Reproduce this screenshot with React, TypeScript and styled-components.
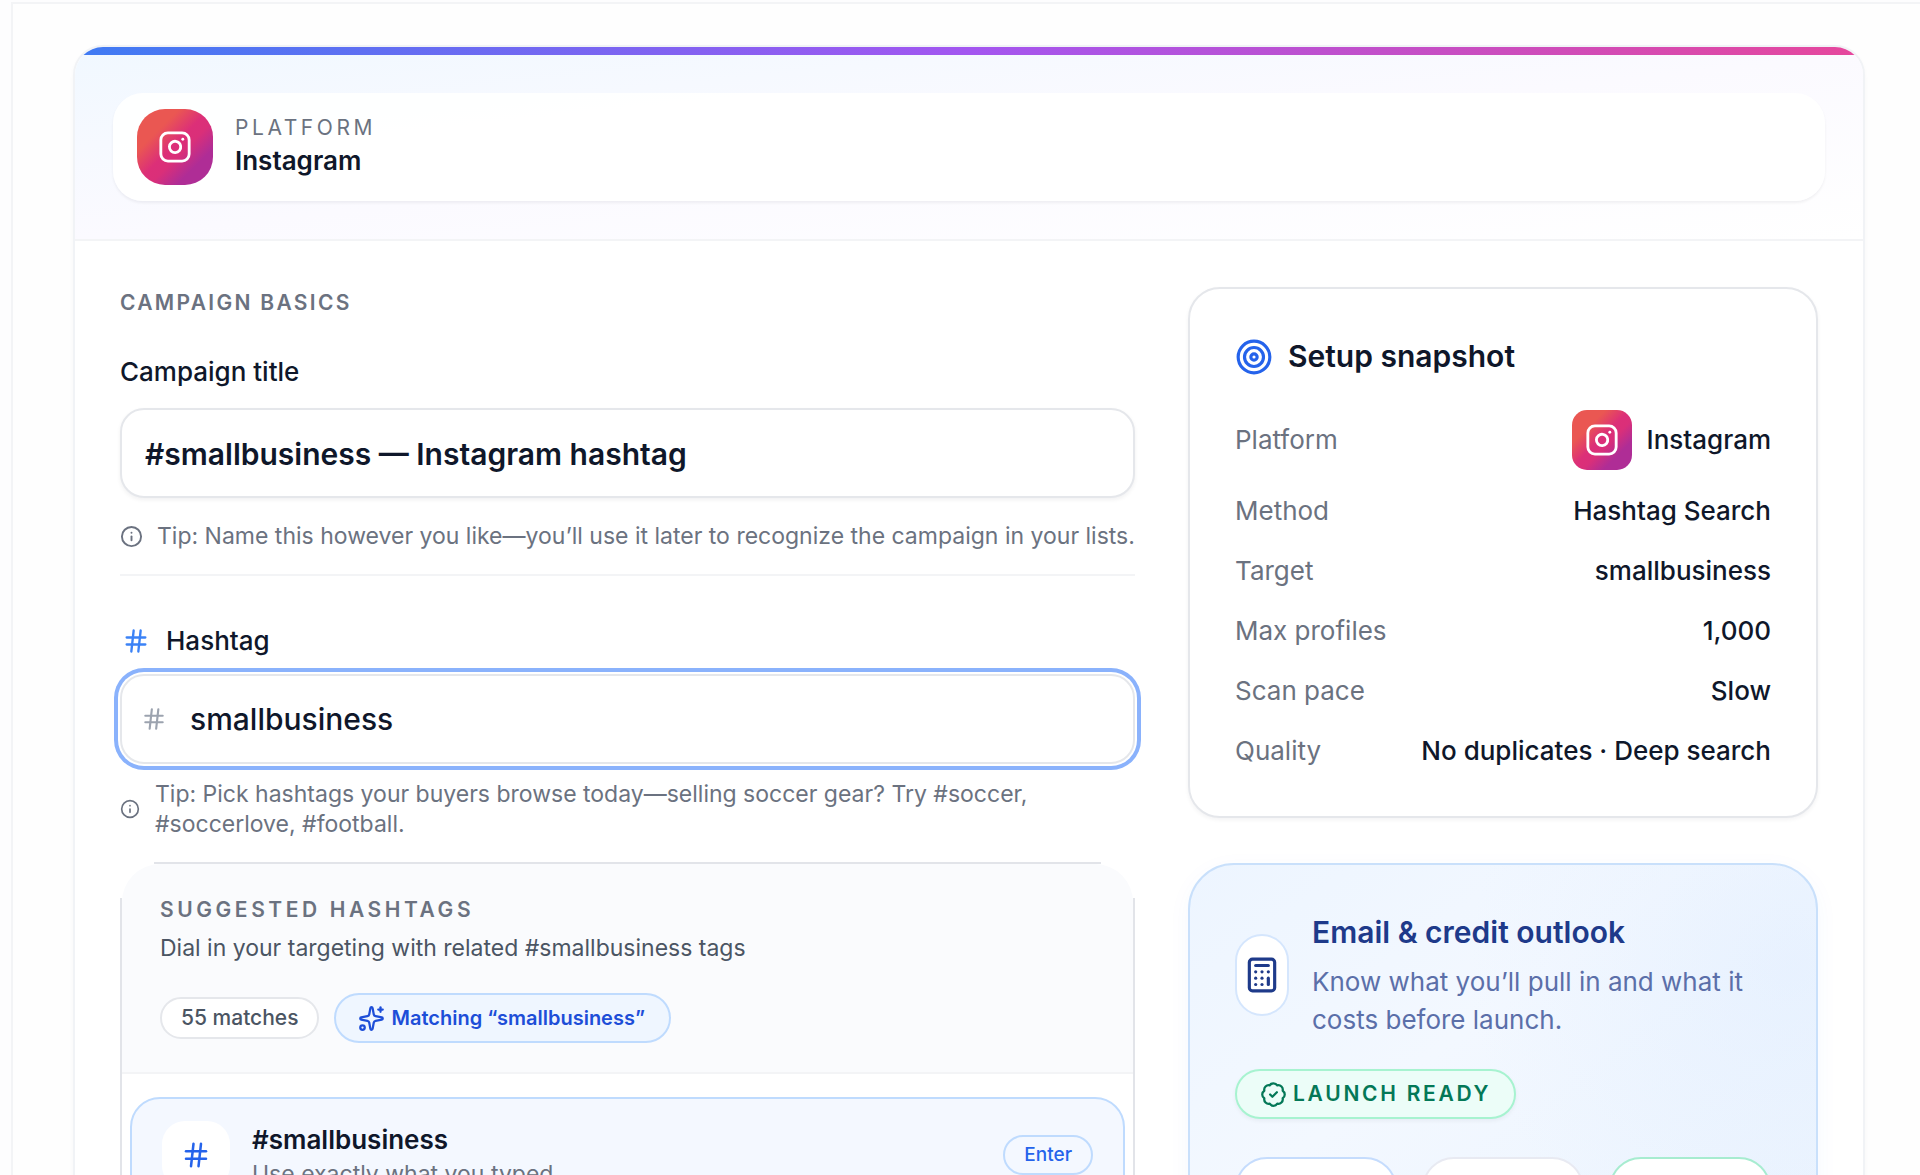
import React, { useState } from "react";
import styled, { createGlobalStyle, css } from "styled-components";
import { BadgeCheck, Calculator, Hash, Info, Instagram, Sparkles, Target } from "lucide-react";

const color = {
  ink: "#0f172a",
  body: "#4b5563",
  muted: "#6b7280",
  faint: "#9ca3af",
  line: "#e5e7eb",
  hairline: "#f3f4f6",
  blue: "#2563eb",
  blueLine: "#bfdbfe",
  blueWash: "#eff6ff",
  navy: "#1e3a8a",
};

const GlobalStyle = createGlobalStyle`
  *, *::before, *::after { box-sizing: border-box; }
  body {
    margin: 0;
    background: #fdfdfe;
    color: ${color.ink};
    font-family: Inter, "Liberation Sans", sans-serif;
    font-size: 26px;
    line-height: 38px;
    -webkit-font-smoothing: antialiased;
  }
  h1, h2, h3, p, dl, dd, ul { margin: 0; padding: 0; }
  input, button { font: inherit; color: inherit; }
`;

const Viewport = styled.div`
  height: 100vh;
  overflow: hidden;
  padding: 2px 0 0 11px;
`;

const Shell = styled.main`
  min-height: 100%;
  padding: 41px 55px 0 60px;
  border: 2px solid ${color.hairline};
  border-width: 2px 0 0 2px;
  background: #fefefe;
`;

const Card = styled.div`
  overflow: hidden;
  border: 2px solid #f1f3f6;
  border-radius: 30px;
  background: #fff;
  box-shadow: 0 2px 4px rgba(15, 23, 42, 0.03);
`;

const AccentBar = styled.div`
  height: 8px;
  background: linear-gradient(90deg, #3f7bf3, #a356f0, #e6479c);
`;

const CardHeader = styled.header`
  padding: 38px;
  border-bottom: 2px solid ${color.hairline};
  background: linear-gradient(to bottom right, #f1f8ff, #fbfaff 50%, #fff);
`;

const PlatformPanel = styled.div`
  display: flex;
  align-items: center;
  gap: 22px;
  padding: 16px 24px;
  border-radius: 30px;
  background: rgba(255, 255, 255, 0.9);
  box-shadow: 0 2px 3px rgba(15, 23, 42, 0.06);
`;

const PlatformTile = styled.span<{ $size: number; $radius: number }>`
  display: inline-flex;
  flex: none;
  align-items: center;
  justify-content: center;
  width: ${(p) => p.$size}px;
  height: ${(p) => p.$size}px;
  border-radius: ${(p) => p.$radius}px;
  background: linear-gradient(135deg, #ea5752 28%, #dc2f78 48%, #da2f79 58%, #af2d96 76%);
  color: #fff;
`;

const Overline = styled.h2<{ $weight?: number; $tracking: string; $line?: number }>`
  color: ${color.muted};
  font-size: 21px;
  font-weight: ${(p) => p.$weight ?? 600};
  line-height: ${(p) => p.$line ?? 30}px;
  letter-spacing: ${(p) => p.$tracking};
  text-transform: uppercase;
`;

const PlatformName = styled.p`
  font-weight: 600;
`;

const Columns = styled.div`
  display: grid;
  grid-template-columns: minmax(0, 1fr) 630px;
  align-items: start;
  gap: 53px;
  padding: 46px 45px;
`;

const MainColumn = styled.section`
  display: flex;
  flex-direction: column;
`;

const Aside = styled.aside`
  display: flex;
  flex-direction: column;
  gap: 45px;
`;

const Field = styled.div`
  display: flex;
  flex-direction: column;
`;

const TitleField = styled(Field)`
  padding: 34px 0 23px;
  border-bottom: 2px solid ${color.hairline};
`;

const HashtagField = styled(Field)`
  padding: 46px 0 23px;
`;

const FieldLabel = styled.label`
  display: flex;
  align-items: center;
  gap: 16px;
  margin-bottom: 17px;
  font-weight: 500;

  svg { color: #3b82f6; }
`;

const HashtagLabel = styled(FieldLabel)`
  margin-bottom: 14px;
  padding-left: 2px;
`;

const fieldBox = css`
  width: 100%;
  height: 90px;
  border: 2px solid ${color.line};
  border-radius: 24px;
  background: #fff;
  font-size: 30px;
`;

const TitleInput = styled.input`
  ${fieldBox}
  padding: 2px 23px 0;
  box-shadow: 0 2px 4px rgba(15, 23, 42, 0.06);
  font-weight: 600;
  outline: none;
`;

const HashtagBox = styled.div`
  ${fieldBox}
  display: flex;
  align-items: center;
  gap: 23px;
  padding: 0 23px 0 19px;
  box-shadow: 0 0 0 2px #fff, 0 0 0 6px #8ab2fc;
  color: ${color.faint};
`;

const HashtagInput = styled.input`
  flex: 1;
  min-width: 0;
  padding: 0;
  border: 0;
  outline: 0;
  background: transparent;
  color: ${color.ink};
  font-weight: 500;
`;

const Tip = styled.p`
  display: flex;
  align-items: center;
  gap: 15px;
  margin-top: 23px;
  color: ${color.muted};
  font-size: 23px;
  line-height: 30px;

  svg { flex: none; }
`;

const TitleTip = styled(Tip)`
  gap: 14px;
  white-space: nowrap;
`;

const HashtagTip = styled(Tip)`
  margin-top: 15px;
`;

const Suggestions = styled.section`
  padding: 2px 2px 0;
  background:
    linear-gradient(#e2e4e9, #e2e4e9) center top / calc(100% - 68px) 2px no-repeat,
    linear-gradient(#e2e4e9, #e2e4e9) left 36px / 2px 100% no-repeat,
    linear-gradient(#e2e4e9, #e2e4e9) right 36px / 2px 100% no-repeat;
`;

const SuggestionsHeader = styled.div`
  padding: 31px 38px 29px;
  border-bottom: 2px solid ${color.hairline};
  border-radius: 38px 38px 0 0;
  background: #fafbfd;
`;

const SuggestionsLead = styled.p`
  margin-top: 8px;
  color: ${color.body};
  font-size: 23px;
  line-height: 30px;
`;

const PillRow = styled.div`
  display: flex;
  align-items: center;
  gap: 15px;
  margin-top: 30px;
`;

const Pill = styled.span<{ $tone?: "plain" | "blue" }>`
  display: inline-flex;
  align-items: center;
  gap: 6px;
  padding: ${(p) => (p.$tone === "blue" ? "8px 24px 8px 22px" : "4px 19px")};
  border: 2px solid ${(p) => (p.$tone === "blue" ? color.blueLine : color.line)};
  border-radius: 30px;
  background: ${(p) => (p.$tone === "blue" ? color.blueWash : "#fff")};
  color: ${(p) => (p.$tone === "blue" ? "#1d4ed8" : color.body)};
  font-size: ${(p) => (p.$tone === "blue" ? 20 : 21)}px;
  font-weight: ${(p) => (p.$tone === "blue" ? 600 : 500)};
  line-height: 30px;
`;

const SuggestionList = styled.ul`
  list-style: none;
  padding: 23px 8px;
`;

const SuggestionButton = styled.button`
  display: flex;
  align-items: center;
  gap: 22px;
  width: 100%;
  padding: 22px 30px;
  border: 2px solid ${color.blueLine};
  border-radius: 30px;
  background: #f4f8ff;
  text-align: left;
`;

const HashTile = styled.span`
  display: inline-flex;
  flex: none;
  align-items: center;
  justify-content: center;
  width: 68px;
  height: 68px;
  border-radius: 23px;
  background: #fff;
  color: ${color.blue};
`;

const SuggestionText = styled.span`
  display: flex;
  flex: 1;
  flex-direction: column;
`;

const SuggestionName = styled.span`
  font-weight: 600;
`;

const SuggestionHint = styled.span`
  color: ${color.muted};
  font-size: 23px;
  line-height: 30px;
`;

const KeyHint = styled.kbd`
  padding: 4px 19px;
  border: 2px solid ${color.blueLine};
  border-radius: 20px;
  color: ${color.blue};
  font-family: inherit;
  font-size: 19px;
  font-weight: 500;
  line-height: 28px;
`;

const SnapshotCard = styled.section`
  padding: 45px;
  border: 2px solid ${color.line};
  border-radius: 32px;
  background: #fff;
  box-shadow: 0 2px 4px rgba(15, 23, 42, 0.05);
`;

const CardTitle = styled.h3`
  display: flex;
  align-items: center;
  gap: 15px;
  font-size: 30px;
  font-weight: 600;
  line-height: 45px;

  svg { color: ${color.blue}; }
`;

const Facts = styled.dl`
  display: flex;
  flex-direction: column;
  gap: 22px;
  margin: 31px 0 1px;
`;

const Fact = styled.div`
  display: flex;
  align-items: center;
  justify-content: space-between;

  dt { color: ${color.muted}; }
  dd {
    display: flex;
    align-items: center;
    gap: 15px;
    font-weight: 500;
  }
`;

const OutlookCard = styled.section`
  padding: 45px;
  border: 2px solid #c9e0fb;
  border-radius: 46px;
  background:
    radial-gradient(circle at 96% 22%, rgba(219, 234, 254, 0.4), transparent 46%),
    linear-gradient(to bottom right, #edf5ff, #f3f8ff 40%, #eaf3fe);
  box-shadow: 0 6px 24px rgba(37, 99, 235, 0.04);
`;

const OutlookIntro = styled.div`
  display: flex;
  align-items: center;
  gap: 23px;
`;

const OutlookBadge = styled.span`
  display: inline-flex;
  flex: none;
  align-items: center;
  justify-content: center;
  width: 54px;
  height: 82px;
  border: 2px solid #d5e6fd;
  border-radius: 27px;
  background: #fff;
  color: ${color.navy};
`;

const OutlookTitle = styled(CardTitle)`
  color: ${color.navy};
`;

const OutlookText = styled.p`
  margin-top: 8px;
  color: #5b6fa9;
`;

const ReadyPill = styled.span`
  display: inline-flex;
  align-items: center;
  gap: 6px;
  margin-top: 30px;
  padding: 8px 23px;
  border: 2px solid #a7f3d0;
  border-radius: 30px;
  background: #ecfdf8;
  box-shadow: 0 2px 4px rgba(15, 23, 42, 0.05);
  color: #047857;
  font-size: 21px;
  font-weight: 600;
  line-height: 30px;
  letter-spacing: 0.13em;
  text-transform: uppercase;
`;

const StatGrid = styled.div`
  display: grid;
  grid-template-columns: repeat(3, minmax(0, 1fr));
  gap: 25px;
  margin-top: 38px;
`;

const Stat = styled.div<{ $line: string }>`
  min-height: 120px;
  border: 2px solid ${(p) => p.$line};
  border-radius: 32px;
  background: #fff;
`;

const facts: Array<[string, string]> = [
  ["Method", "Hashtag Search"],
  ["Target", "smallbusiness"],
  ["Max profiles", "1,000"],
  ["Scan pace", "Slow"],
  ["Quality", "No duplicates · Deep search"],
];

const statLines = ["#c5dcfd", "#e8eaf2", "#a7ecd0"];

export default function App() {
  const [title, setTitle] = useState("#smallbusiness — Instagram hashtag");
  const [hashtag, setHashtag] = useState("smallbusiness");

  return (
    <>
      <GlobalStyle />
      <Viewport>
        <Shell>
          <Card>
            <AccentBar />
            <CardHeader>
              <PlatformPanel>
                <PlatformTile $size={76} $radius={28}>
                  <Instagram size={34} strokeWidth={2} />
                </PlatformTile>
                <div>
                  <Overline $weight={400} $tracking="0.17em" $line={28}>Platform</Overline>
                  <PlatformName>Instagram</PlatformName>
                </div>
              </PlatformPanel>
            </CardHeader>

            <Columns>
              <MainColumn>
                <Overline $tracking="0.11em" $line={32}>Campaign basics</Overline>

                <TitleField>
                  <FieldLabel htmlFor="campaign-title">Campaign title</FieldLabel>
                  <TitleInput
                    id="campaign-title"
                    value={title}
                    onChange={(e) => setTitle(e.target.value)}
                  />
                  <TitleTip>
                    <Info size={23} />
                    Tip: Name this however you like—you’ll use it later to recognize the campaign in your lists.
                  </TitleTip>
                </TitleField>

                <HashtagField>
                  <HashtagLabel htmlFor="hashtag">
                    <Hash size={28} />
                    Hashtag
                  </HashtagLabel>
                  <HashtagBox>
                    <Hash size={26} />
                    <HashtagInput
                      id="hashtag"
                      value={hashtag}
                      onChange={(e) => setHashtag(e.target.value)}
                    />
                  </HashtagBox>
                  <HashtagTip>
                    <Info size={20} />
                    <span>
                      Tip: Pick hashtags your buyers browse today—selling soccer gear? Try #soccer, #soccerlove, #football.
                    </span>
                  </HashtagTip>
                </HashtagField>

                <Suggestions>
                  <SuggestionsHeader>
                    <Overline $tracking="0.17em">Suggested hashtags</Overline>
                    <SuggestionsLead>Dial in your targeting with related #smallbusiness tags</SuggestionsLead>
                    <PillRow>
                      <Pill>55 matches</Pill>
                      <Pill $tone="blue">
                        <Sparkles size={27} />
                        Matching “smallbusiness”
                      </Pill>
                    </PillRow>
                  </SuggestionsHeader>
                  <SuggestionList>
                    <li>
                      <SuggestionButton type="button">
                        <HashTile>
                          <Hash size={30} />
                        </HashTile>
                        <SuggestionText>
                          <SuggestionName>#smallbusiness</SuggestionName>
                          <SuggestionHint>Use exactly what you typed</SuggestionHint>
                        </SuggestionText>
                        <KeyHint>Enter</KeyHint>
                      </SuggestionButton>
                    </li>
                  </SuggestionList>
                </Suggestions>
              </MainColumn>

              <Aside>
                <SnapshotCard>
                  <CardTitle>
                    <Target size={38} />
                    Setup snapshot
                  </CardTitle>
                  <Facts>
                    <Fact>
                      <dt>Platform</dt>
                      <dd>
                        <PlatformTile $size={60} $radius={15}>
                          <Instagram size={34} strokeWidth={2} />
                        </PlatformTile>
                        Instagram
                      </dd>
                    </Fact>
                    {facts.map(([name, value]) => (
                      <Fact key={name}>
                        <dt>{name}</dt>
                        <dd>{value}</dd>
                      </Fact>
                    ))}
                  </Facts>
                </SnapshotCard>

                <OutlookCard>
                  <OutlookIntro>
                    <OutlookBadge>
                      <Calculator size={38} />
                    </OutlookBadge>
                    <div>
                      <OutlookTitle>Email &amp; credit outlook</OutlookTitle>
                      <OutlookText>Know what you’ll pull in and what it costs before launch.</OutlookText>
                    </div>
                  </OutlookIntro>
                  <ReadyPill>
                    <BadgeCheck size={27} />
                    Launch ready
                  </ReadyPill>
                  <StatGrid>
                    {statLines.map((line) => (
                      <Stat key={line} $line={line} />
                    ))}
                  </StatGrid>
                </OutlookCard>
              </Aside>
            </Columns>
          </Card>
        </Shell>
      </Viewport>
    </>
  );
}
